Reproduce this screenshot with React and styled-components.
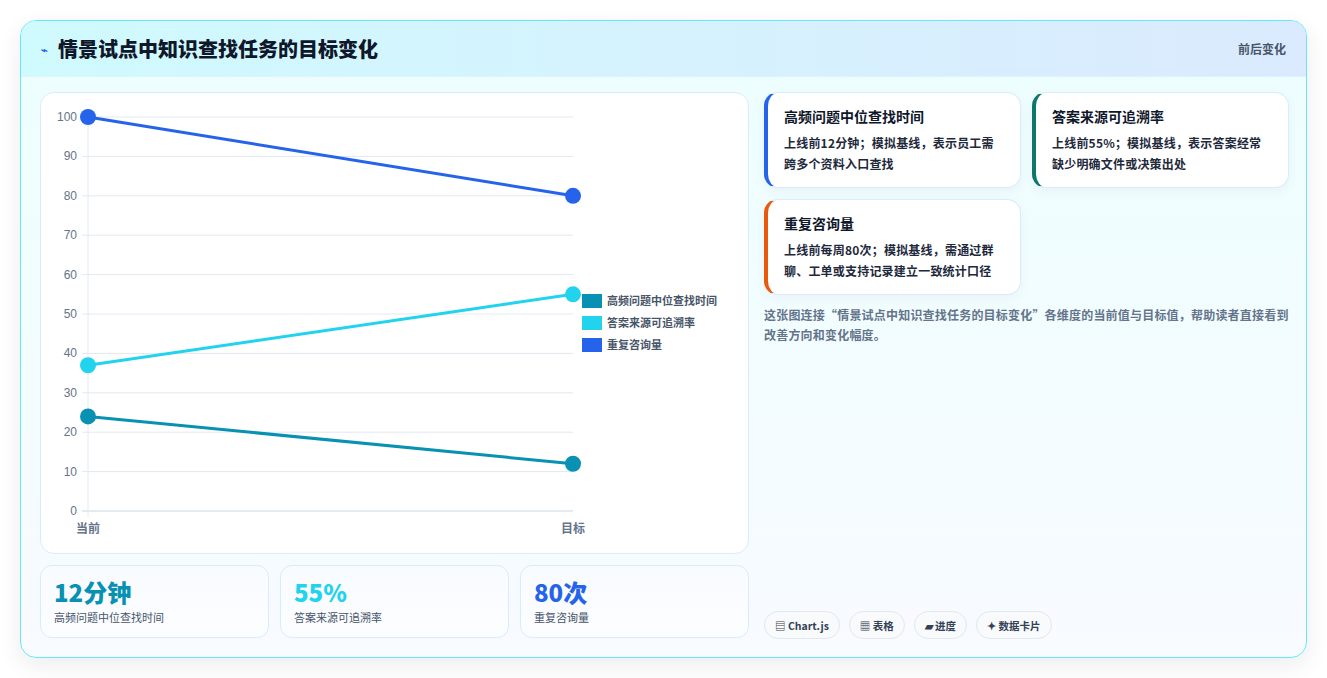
import React from "react";
import styled, { createGlobalStyle } from "styled-components";

const G = createGlobalStyle`
  html,body{margin:0;background:#fff;}
  body{font-family:"Noto Sans CJK SC","Noto Sans",sans-serif;}
  *{box-sizing:border-box;}
`;
const Page = styled.div`padding:20px 20px 20px 20px;`;
const Card = styled.div`
  width:1287px;height:638px;border:1px solid #67e8f9;border-radius:16px;overflow:hidden;
  background:linear-gradient(180deg,#ecfeff,#f8fbff);
  box-shadow:0 8px 24px rgba(15,23,42,0.08);display:flex;flex-direction:column;
`;
const Header = styled.div`
  height:56px;flex:none;display:flex;align-items:center;justify-content:space-between;
  padding:0 20px;background:linear-gradient(90deg,#cffafe,#dbeafe);border-bottom:1px solid #e0f2fe;
`;
const Title = styled.h1`margin:0;font-size:20px;font-weight:800;color:#0f172a;display:flex;align-items:center;gap:10px;`;
const Bolt = styled.span`color:#2563eb;font-size:11px;`;
const Tag = styled.span`font-size:12px;font-weight:700;color:#475569;`;
const Body = styled.div`flex:1;display:flex;gap:15px;padding:15px 19px 18px 19px;`;
const Left = styled.div`width:709px;display:flex;flex-direction:column;gap:11px;`;
const Panel = styled.div`height:462px;background:#fff;border:1px solid #dbeafe;border-radius:14px;`;
const Stats = styled.div`display:grid;grid-template-columns:repeat(3,1fr);gap:11px;`;
const Stat = styled.div`
  height:73px;border:1px solid #dbeafe;border-radius:12px;background:linear-gradient(180deg,#f8fbff,#fcfdff);
  padding:9px 13px;display:flex;flex-direction:column;
`;
const Big = styled.div`font-size:24px;font-weight:800;color:${p=>p.c};line-height:34px;`;
const Small = styled.div`font-size:11px;color:#475569;line-height:16px;`;
const Right = styled.div`flex:1;display:flex;flex-direction:column;`;
const Grid = styled.div`display:grid;grid-template-columns:257px 257px;gap:11px;align-items:start;`;
const Info = styled.div`
  background:#fff;border:1px solid #dbeafe;border-left:4px solid ${p=>p.c};border-radius:14px;
  padding:12px 18px 13px 16px;box-shadow:0 4px 12px rgba(15,23,42,0.04);
`;
const InfoT = styled.div`font-size:14px;font-weight:700;color:#0f172a;line-height:22px;margin-bottom:5px;`;
const InfoB = styled.div`font-size:12px;font-weight:700;color:#1e293b;line-height:21px;letter-spacing:0.2px;`;
const Desc = styled.p`margin:10px 0 0;font-size:12px;font-weight:600;color:#64748b;line-height:20px;letter-spacing:0.2px;`;
const Tags = styled.div`margin-top:auto;display:flex;gap:9px;`;
const Pill = styled.span`
  height:28px;padding:0 10px;border:1px solid #e2e8f0;border-radius:14px;background:#f8fafc;
  display:flex;align-items:center;gap:3px;font-size:10.5px;font-weight:700;color:#334155;
`;

const X0=47,X1=532,Y0=418,Y100=24;
const y=v=>Y0-(Y0-Y100)*v/100;
const series=[
  {c:"#0891b2",a:24,b:12,n:"高频问题中位查找时间"},
  {c:"#22d3ee",a:37,b:55,n:"答案来源可追溯率"},
  {c:"#2563eb",a:100,b:80,n:"重复咨询量"},
];
function Chart(){
  const ticks=[0,10,20,30,40,50,60,70,80,90,100];
  return(
    <svg width="707" height="460" style={{display:"block"}}>
      {ticks.map(t=>(
        <g key={t}>
          <line x1={X0-6} x2={X1} y1={y(t)} y2={y(t)} stroke={t===0?"#cbd5e1":"#e2e8f0"}/>
          <text x={X0-11} y={y(t)+4} textAnchor="end" fontSize="12" fill="#64748b" fontFamily="Liberation Sans">{t}</text>
        </g>
      ))}
      <line x1={X0} x2={X0} y1={Y100} y2={Y0+6} stroke="#e2e8f0"/>
      <text x={X0} y={440} textAnchor="middle" fontSize="12" fontWeight="600" fill="#64748b">当前</text>
      <text x={X1} y={440} textAnchor="middle" fontSize="12" fontWeight="600" fill="#64748b">目标</text>
      {series.map(s=>(
        <g key={s.n}>
          <line x1={X0} y1={y(s.a)} x2={X1} y2={y(s.b)} stroke={s.c} strokeWidth="3"/>
          <circle cx={X0} cy={y(s.a)} r="8" fill={s.c}/>
          <circle cx={X1} cy={y(s.b)} r="8" fill={s.c}/>
        </g>
      ))}
      {series.map((s,i)=>(
        <g key={i}>
          <rect x={541} y={201+i*22} width={20} height={14} fill={s.c}/>
          <text x={566} y={212+i*22} fontSize="11" fontWeight="600" fill="#475569">{s.n}</text>
        </g>
      ))}
    </svg>
  );
}

export default function App(){
  return(<Page><G/>
    <Card>
      <Header><Title><Bolt>⌁</Bolt>情景试点中知识查找任务的目标变化</Title><Tag>前后变化</Tag></Header>
      <Body>
        <Left>
          <Panel><Chart/></Panel>
          <Stats>
            <Stat><Big c="#0891b2">12分钟</Big><Small>高频问题中位查找时间</Small></Stat>
            <Stat><Big c="#22d3ee">55%</Big><Small>答案来源可追溯率</Small></Stat>
            <Stat><Big c="#2563eb">80次</Big><Small>重复咨询量</Small></Stat>
          </Stats>
        </Left>
        <Right>
          <Grid>
            <Info c="#2563eb"><InfoT>高频问题中位查找时间</InfoT><InfoB>上线前12分钟；模拟基线，表示员工需跨多个资料入口查找</InfoB></Info>
            <Info c="#0f766e"><InfoT>答案来源可追溯率</InfoT><InfoB>上线前55%；模拟基线，表示答案经常缺少明确文件或决策出处</InfoB></Info>
            <Info c="#ea580c"><InfoT>重复咨询量</InfoT><InfoB>上线前每周80次；模拟基线，需通过群聊、工单或支持记录建立一致统计口径</InfoB></Info>
          </Grid>
          <Desc>这张图连接“情景试点中知识查找任务的目标变化”各维度的当前值与目标值，帮助读者直接看到改善方向和变化幅度。</Desc>
          <Tags>
            <Pill>▤ Chart.js</Pill><Pill>▦ 表格</Pill><Pill>▰ 进度</Pill><Pill>✦ 数据卡片</Pill>
          </Tags>
        </Right>
      </Body>
    </Card>
  </Page>);
}
